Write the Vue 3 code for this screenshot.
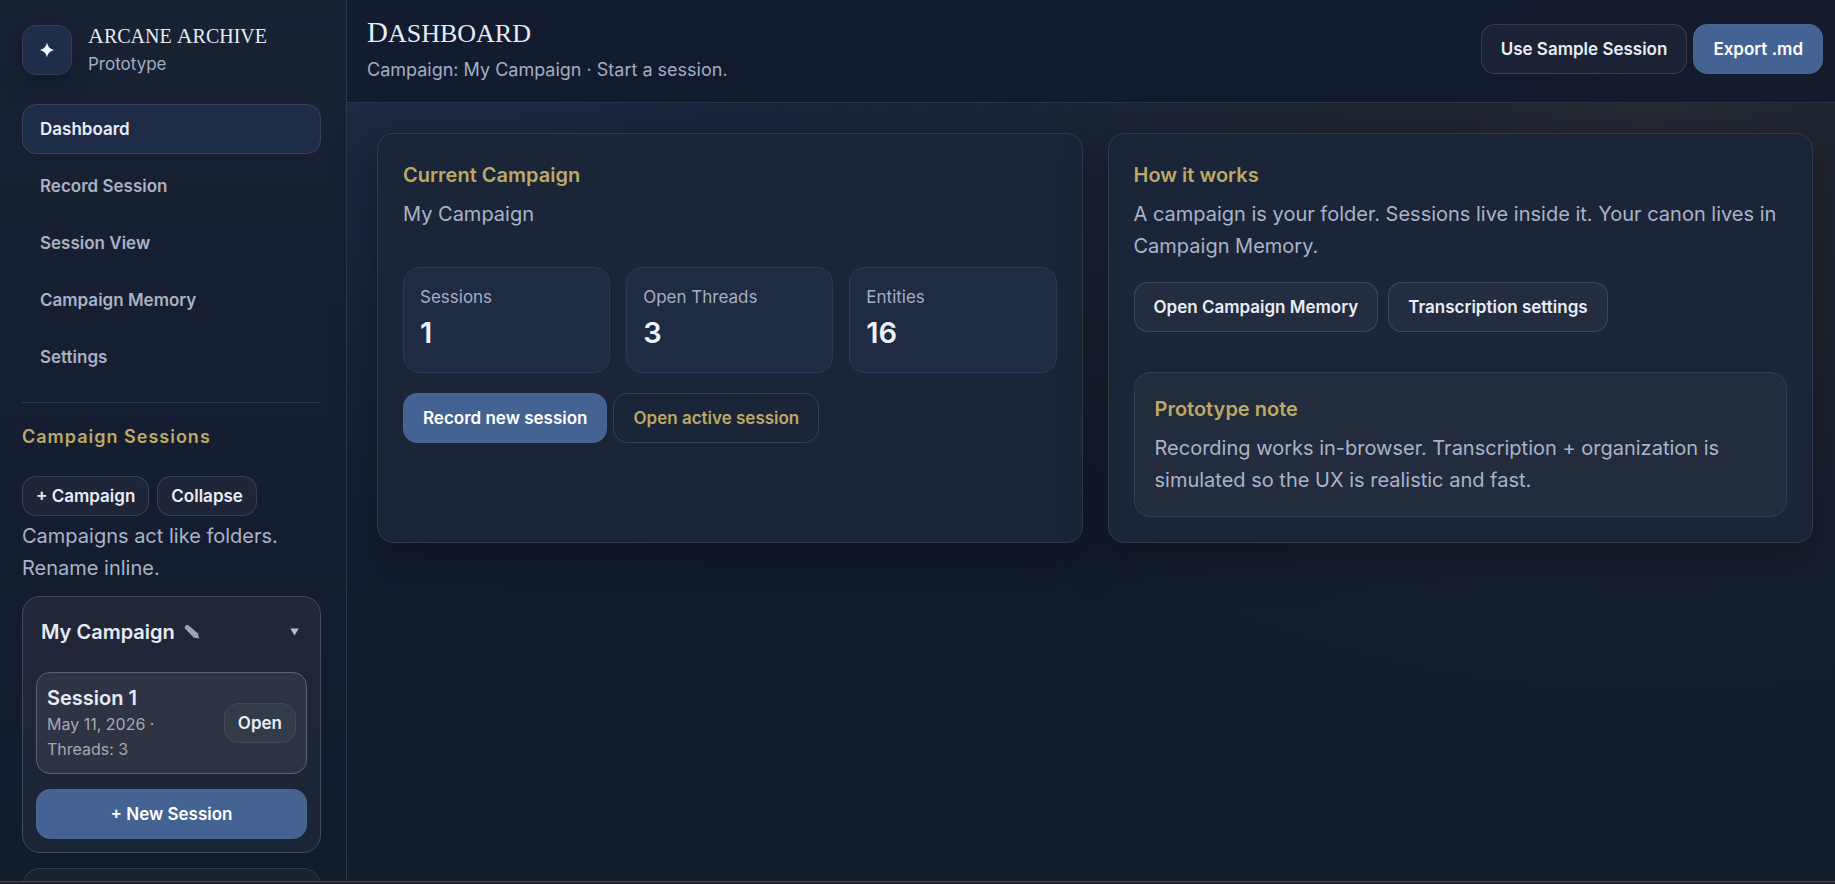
<script setup>
import { ref } from 'vue'

const nav = ['Dashboard', 'Record Session', 'Session View', 'Campaign Memory', 'Settings']
const active = ref('Dashboard')
const stats = [
  { label: 'Sessions', value: 1 },
  { label: 'Open Threads', value: 3 },
  { label: 'Entities', value: 16 },
]
</script>

<template>
  <div class="app">
    <div class="shell">
      <aside class="sidebar">
        <div class="brand">
          <div class="logo">
            <svg width="16" height="16" viewBox="0 0 16 16" aria-hidden="true">
              <path d="M8 0.6 C8.9 4.8 11 7.1 15.2 8 C11 8.9 8.9 11.2 8 15.4 C7.1 11.2 5 8.9 0.8 8 C5 7.1 7.1 4.8 8 0.6Z" fill="#eef3fc" />
            </svg>
          </div>
          <div>
            <div class="brand-name"><span class="word">Arcane</span> <span class="word">Archive</span></div>
            <div class="brand-sub">Prototype</div>
          </div>
        </div>

        <nav class="nav">
          <button
            v-for="item in nav"
            :key="item"
            type="button"
            class="nav-item"
            :class="{ active: item === active }"
            @click="active = item"
          >{{ item }}</button>
        </nav>

        <section class="sessions">
          <h2 class="side-title">Campaign Sessions</h2>
          <div class="side-actions">
            <button type="button" class="btn small">+ Campaign</button>
            <button type="button" class="btn small">Collapse</button>
          </div>
          <p class="muted">Campaigns act like folders. Rename inline.</p>

          <div class="campaign">
            <div class="campaign-head">
              <span class="campaign-name">My Campaign</span>
              <button type="button" class="icon-btn" aria-label="Rename campaign">
                <svg width="16" height="16" viewBox="0 0 16 16" aria-hidden="true">
                  <path d="M1 4.4 C0.2 2.2 2.2 0.4 4.4 1.2 L13.8 9.2 L15.2 14.6 L9.6 13.6 Z" fill="#a3a5ad" />
                  <path d="M3 5.6 L5.8 2.5 M9.8 13.3 L13.6 9.4" stroke="#858894" stroke-width="0.7" />
                </svg>
              </button>
              <button type="button" class="icon-btn caret" aria-label="Toggle campaign">
                <svg width="9" height="8" viewBox="0 0 9 8" aria-hidden="true">
                  <path d="M0.3 0.5 H8.7 L4.5 7.6Z" fill="#b9bfcb" />
                </svg>
              </button>
            </div>
            <div class="session">
              <div class="session-text">
                <div class="session-name">Session 1</div>
                <div class="session-meta">May 11, 2026 · Threads: 3</div>
              </div>
              <button type="button" class="btn small open">Open</button>
            </div>
            <button type="button" class="btn primary wide">+ New Session</button>
          </div>
          <div class="campaign next"></div>
        </section>
      </aside>

      <div class="content">
        <header class="topbar">
          <div>
            <h1 class="page-title"><span class="word">Dashboard</span></h1>
            <p class="page-sub">Campaign: My Campaign · Start a session.</p>
          </div>
          <div class="top-actions">
            <button type="button" class="btn">Use Sample Session</button>
            <button type="button" class="btn primary">Export .md</button>
          </div>
        </header>

        <main class="grid">
          <section class="card">
            <h3>Current Campaign</h3>
            <p class="muted">My Campaign</p>
            <div class="stats">
              <div v-for="s in stats" :key="s.label" class="stat">
                <div class="stat-label">{{ s.label }}</div>
                <div class="stat-value">{{ s.value }}</div>
              </div>
            </div>
            <div class="row tight">
              <button type="button" class="btn primary">Record new session</button>
              <button type="button" class="btn ghost">Open active session</button>
            </div>
          </section>

          <section class="card">
            <h3>How it works</h3>
            <p class="muted">A campaign is your folder. Sessions live inside it. Your canon lives in Campaign Memory.</p>
            <div class="row">
              <button type="button" class="btn">Open Campaign Memory</button>
              <button type="button" class="btn">Transcription settings</button>
            </div>
            <div class="note">
              <h3>Prototype note</h3>
              <p class="muted">Recording works in-browser. Transcription + organization is simulated so the UX is realistic and fast.</p>
            </div>
          </section>
        </main>
      </div>
    </div>
    <footer class="edge"></footer>
  </div>
</template>

<style>
body {
  margin: 0;
  background: #111a2b;
}
</style>

<style scoped>
* {
  box-sizing: border-box;
}

.app {
  display: flex;
  flex-direction: column;
  height: 100vh;
  overflow: hidden;
  font-family: Inter, "Liberation Sans", sans-serif;
  font-size: 20px;
  line-height: 32px;
  color: #e6ebf5;
  background:
    radial-gradient(ellipse 1100px 600px at 20% 0%, rgba(62, 82, 126, 0.32), transparent 100%),
    radial-gradient(ellipse 900px 650px at 90% 10%, rgba(140, 118, 84, 0.16), transparent 100%),
    #111b2c;
}

.shell {
  display: flex;
  flex: 1;
  min-height: 0;
}

h1,
h2,
h3,
p {
  margin: 0;
  font-weight: 400;
}

button {
  margin: 0;
  font-family: inherit;
  cursor: pointer;
}

.sidebar {
  flex: none;
  width: 347px;
  padding: 25px 25px 0 22px;
  overflow: hidden;
  border-right: 1px solid #2d3747;
  background: linear-gradient(180deg, #182233 0%, #151e30 50%, #121b2c 100%);
}

.brand {
  display: flex;
  gap: 16px;
  align-items: center;
  height: 50px;
}

.logo {
  display: flex;
  flex: none;
  align-items: center;
  justify-content: center;
  width: 50px;
  height: 50px;
  border: 1px solid #314058;
  border-radius: 14px;
  background: #1f2d48;
  box-shadow: 0 10px 24px rgba(8, 12, 28, 0.35);
}

.brand-name,
.page-title {
  font-family: "Liberation Serif", serif;
  text-transform: uppercase;
  white-space: nowrap;
}

.brand-name {
  font-size: 20px;
  line-height: 28px;
}

.word {
  display: inline-block;
}

.brand-name .word::first-letter {
  font-size: 22px;
}

.brand-sub {
  font-size: 17px;
  line-height: 28px;
  color: #a3adc0;
}

.nav {
  display: flex;
  flex-direction: column;
  gap: 7px;
  margin-top: 29px;
  padding-bottom: 20px;
  border-bottom: 1px solid #2c3747;
}

.nav-item {
  height: 50px;
  padding: 0 17px;
  border: 1px solid transparent;
  border-radius: 14px;
  background: transparent;
  color: #a9b2c3;
  font-size: 17px;
  font-weight: 600;
  text-align: left;
}

.nav-item.active {
  border-color: #34435f;
  background: #1f2c48;
  color: #e8edf7;
}

.side-title {
  margin: 18px 0 23px;
  color: #bda866;
  font-size: 18px;
  font-weight: 600;
  letter-spacing: 1px;
}

.side-actions {
  display: flex;
  gap: 8px;
  margin-bottom: 4px;
}

.btn {
  height: 50px;
  padding: 0 19px;
  border: 1px solid rgba(255, 255, 255, 0.13);
  border-radius: 14px;
  background: rgba(255, 255, 255, 0.04);
  color: #e8edf7;
  font-size: 17px;
  font-weight: 600;
  white-space: nowrap;
}

.btn.small {
  height: 40px;
  padding: 0 13px;
}

.btn.primary {
  border-color: #4a6796;
  background: #456392;
  color: #fff;
}

.btn.ghost {
  background: transparent;
  color: #bda866;
}

.btn.wide {
  width: 100%;
}

.btn.open {
  flex: none;
  border-color: #424a55;
  background: #323c48;
}

.muted {
  color: #a9b3c8;
}

.campaign {
  margin-top: 12px;
  padding: 0 13px 13px;
  border: 1px solid #444c5c;
  border-radius: 18px;
  background: linear-gradient(180deg, #222639 0%, #1d2637 60%, #1c2536 100%);
}

.campaign.next {
  height: 100px;
  margin-top: 15px;
  border-color: #323b4a;
  background: #192233;
}

.campaign-head {
  display: flex;
  align-items: center;
  height: 70px;
  margin-bottom: 5px;
  padding: 0 8px 0 5px;
}

.campaign-name {
  font-weight: 600;
}

.icon-btn {
  display: flex;
  margin-left: 9px;
  padding: 0;
  border: 0;
  background: transparent;
}

.icon-btn.caret {
  margin-left: auto;
}

.session {
  display: flex;
  gap: 8px;
  align-items: center;
  justify-content: space-between;
  height: 102px;
  margin-bottom: 15px;
  padding: 0 10px;
  border: 1px solid #5c6371;
  border-radius: 14px;
  background: #2f3444;
}

.session-text {
  min-width: 0;
}

.session-name {
  font-weight: 600;
  line-height: 28px;
}

.session-meta {
  max-width: 128px;
  color: #a7a9b0;
  font-size: 16px;
  line-height: 25px;
}

.content {
  flex: 1;
  min-width: 0;
}

.topbar {
  display: flex;
  align-items: center;
  justify-content: space-between;
  height: 103px;
  padding: 0 12px 4px 20px;
  border-bottom: 1px solid #293343;
  background: linear-gradient(90deg, #121c2e 0%, #101a2d 60%, #141b2c 100%);
}

.page-title {
  font-size: 26px;
  line-height: 40px;
}

.page-title .word::first-letter {
  font-size: 29px;
}

.page-sub {
  color: #a3adc1;
  font-size: 18px;
}

.top-actions {
  display: flex;
  gap: 6px;
}

.grid {
  display: grid;
  grid-template-columns: 1fr 1fr;
  gap: 25px;
  padding: 30px 22px 30px 30px;
}

.card {
  padding: 25px;
  border: 1px solid #303b4a;
  border-radius: 16px;
  background: #1b2538;
  box-shadow: 0 14px 40px rgba(12, 14, 22, 0.55);
}

h3 {
  margin-bottom: 7px;
  color: #bda866;
  font-size: 20px;
  font-weight: 600;
}

.stats {
  display: grid;
  grid-template-columns: repeat(3, 1fr);
  gap: 16px;
  margin: 37px 0 20px;
}

.stat {
  padding: 16px;
  border: 1px solid #2d3955;
  border-radius: 16px;
  background: #1f2a43;
}

.stat-label {
  color: #a6afc1;
  font-size: 17px;
  line-height: 26px;
}

.stat-value {
  color: #edf2fa;
  font-size: 29px;
  font-weight: 600;
  line-height: 46px;
}

.row {
  display: flex;
  flex-wrap: wrap;
  gap: 10px;
  margin-top: 20px;
}

.row.tight {
  gap: 6px;
}

.note {
  margin-top: 40px;
  padding: 20px;
  border: 1px solid #343e4c;
  border-radius: 16px;
  background: #222c3d;
}

.edge {
  flex: none;
  height: 3px;
  border-top: 1px solid #45484d;
  background: #1f2228;
}
</style>
